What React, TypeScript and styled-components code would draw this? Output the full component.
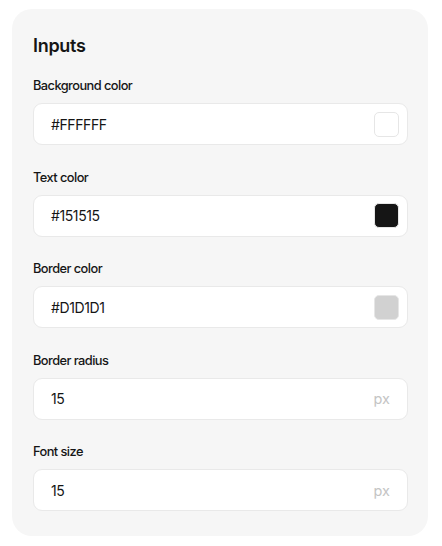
import React from 'react';
import styled, { createGlobalStyle } from 'styled-components';

const GlobalStyle = createGlobalStyle`
  body {
    margin: 0;
    background: #ffffff;
    font-family: Inter, "Noto Sans", sans-serif;
    color: #151515;
  }
`

const Page = styled.div`
  padding: 9px 14px 10px 12px;
`

const Card = styled.section`
  width: 416px;
  box-sizing: border-box;
  background: #f6f6f6;
  border-radius: 20px;
  padding: 25px 20px 25px 21px;
  display: flex;
  flex-direction: column;
`

const Title = styled.h2`
  margin: 0 0 18px;
  font-size: 18px;
  line-height: 24px;
  font-weight: 600;
  letter-spacing: -0.3px;
`

const Fields = styled.div`
  display: flex;
  flex-direction: column;
  gap: 22.5px;
`

const Field = styled.div`
  display: flex;
  flex-direction: column;
  gap: 8px;
`

const Label = styled.label`
  font-size: 12.8px;
  line-height: 19px;
  font-weight: 500;
  letter-spacing: -0.55px;
`

const InputBox = styled.div<{ $suffix?: boolean }>`
  height: 42px;
  box-sizing: border-box;
  background: #ffffff;
  border: 1px solid #e9e9e9;
  border-radius: 9px;
  display: flex;
  align-items: center;
  justify-content: space-between;
  padding: 0 ${props => (props.$suffix ? '17px' : '8px')} 0 17px;
`

const Value = styled.span`
  font-size: 14px;
  font-weight: 400;
  letter-spacing: -0.4px;
`

const Swatch = styled.span<{ $color: string }>`
  width: 25px;
  height: 25px;
  box-sizing: border-box;
  border-radius: 5px;
  background: ${props => props.$color};
  border: 1px solid #e6e6e6;
`

const Suffix = styled.span`
  font-size: 14.5px;
  color: #c4c4c4;
`

const colorFields = [
  { label: 'Background color', value: '#FFFFFF' },
  { label: 'Text color', value: '#151515' },
  { label: 'Border color', value: '#D1D1D1' },
]

const sizeFields = [
  { label: 'Border radius', value: '15' },
  { label: 'Font size', value: '15' },
]

const App: React.FC = () => {
  return (
    <Page>
      <GlobalStyle />
      <Card>
        <Title>Inputs</Title>
        <Fields>
          {colorFields.map(f => (
            <Field key={f.label}>
              <Label>{f.label}</Label>
              <InputBox>
                <Value>{f.value}</Value>
                <Swatch $color={f.value} />
              </InputBox>
            </Field>
          ))}
          {sizeFields.map(f => (
            <Field key={f.label}>
              <Label>{f.label}</Label>
              <InputBox $suffix>
                <Value>{f.value}</Value>
                <Suffix>px</Suffix>
              </InputBox>
            </Field>
          ))}
        </Fields>
      </Card>
    </Page>
  )
}

export default App;
